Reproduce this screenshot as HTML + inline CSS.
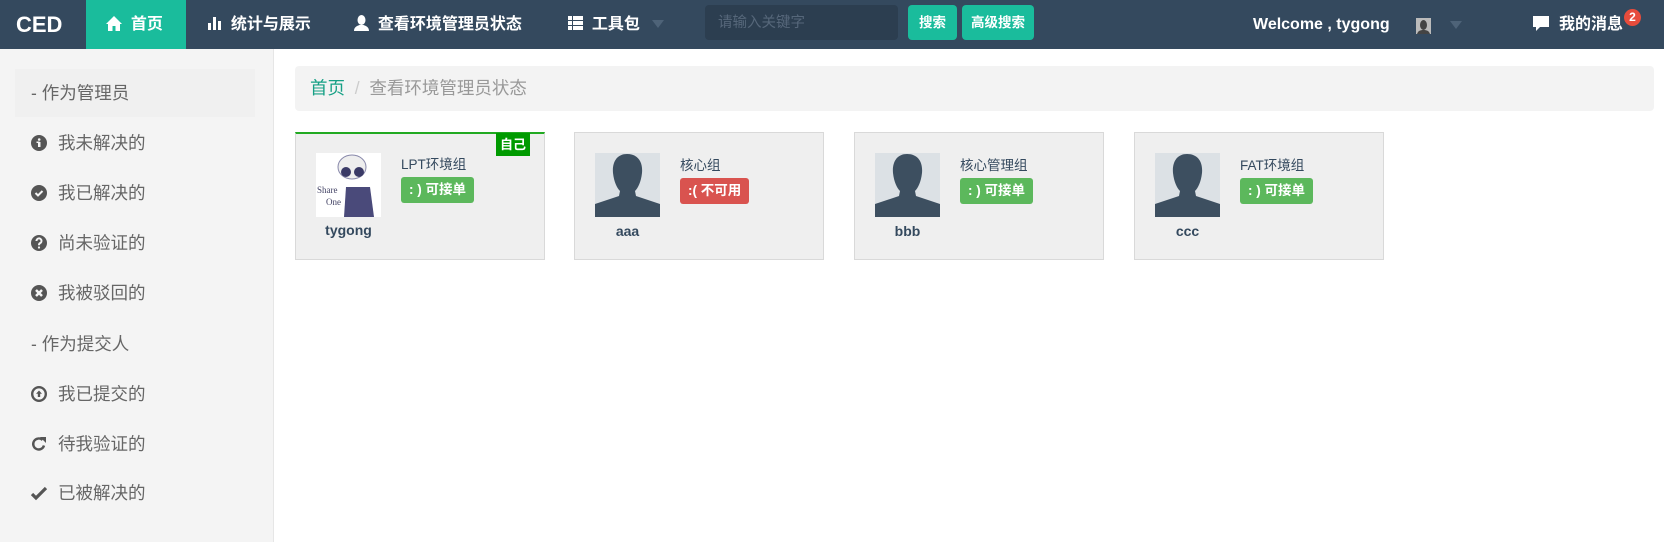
<!DOCTYPE html>
<html><head><meta charset="utf-8"><style>
*{margin:0;padding:0;box-sizing:border-box}
body{width:1664px;height:542px;overflow:hidden;background:#fff;font-family:"Liberation Sans","Noto Sans CJK SC",sans-serif;position:relative}
.nav{position:absolute;left:0;top:0;width:1664px;height:49px;background:#34495e;color:#fff;font-weight:bold}
.a{position:absolute;top:0;height:49px;line-height:49px;font-size:16px;white-space:nowrap}
.side{position:absolute;left:0;top:49px;width:274px;height:493px;background:#f4f4f4;border-right:1px solid #e6e6e6}
.si{position:absolute;left:31px;font-size:17.5px;color:#666;line-height:24px;white-space:nowrap}
.si svg{position:absolute;left:0;top:4px}
.si span{position:absolute;left:27px;top:0}
.card{position:absolute;top:132px;width:250px;height:128px;background:#efefef;border:1px solid #d9d9d9}
.av{position:absolute;left:20px;top:20px;width:65px;height:64px;background:#dce1e5;overflow:hidden}
.nm{position:absolute;left:0;width:105px;top:90px;text-align:center;font-weight:bold;font-size:14px;color:#34495e}
.gt{position:absolute;left:105px;top:21px;font-size:13.5px;color:#34495e}
.bd{position:absolute;left:105px;top:45px;height:26px;line-height:26px;padding:0 8px;border-radius:3px;color:#fff;font-weight:bold;font-size:13.5px}
</style></head><body>
<div class="nav">
 <div class="a" style="left:16px;font-size:22px">CED</div>
 <div class="a" style="left:86px;width:100px;background:#1abc9c;padding-left:20px">
  <svg width="16" height="15" viewBox="0 0 16 15" style="vertical-align:-2px"><path d="M8 0L0 8h2v7h4.5v-5h3v5H14V8h2z" fill="#fff"/></svg>&nbsp; 首页</div>
 <div class="a" style="left:208px"><svg width="14" height="14" viewBox="0 0 14 14" style="vertical-align:-1px"><rect x="0" y="7" width="3" height="7" fill="#fff"/><rect x="5" y="1" width="3" height="13" fill="#fff"/><rect x="10" y="5" width="3" height="9" fill="#fff"/></svg>&nbsp; 统计与展示</div>
 <div class="a" style="left:354px"><svg width="15" height="16" viewBox="0 0 15 16" style="vertical-align:-2px"><ellipse cx="7.5" cy="5" rx="4" ry="5" fill="#fff"/><path d="M0 16c0-4 3-5 5.5-6h4c2.5 1 5.5 2 5.5 6z" fill="#fff"/></svg>&nbsp; 查看环境管理员状态</div>
 <div class="a" style="left:568px"><svg width="15" height="14" viewBox="0 0 15 14" style="vertical-align:-1px"><g fill="#fff"><rect x="0" y="0" width="4" height="4"/><rect x="5" y="0" width="10" height="4"/><rect x="0" y="5" width="4" height="4"/><rect x="5" y="5" width="10" height="4"/><rect x="0" y="10" width="4" height="4"/><rect x="5" y="10" width="10" height="4"/></g></svg>&nbsp; 工具包</div>
 <svg style="position:absolute;left:652px;top:20px" width="12" height="8"><path d="M0 0h12L6 8z" fill="#4e6378"/></svg>
 <div style="position:absolute;left:705px;top:5px;width:193px;height:35px;background:#2c3e50;border-radius:4px;color:#56677a;font-weight:normal;font-size:14.5px;line-height:37px;padding-left:13px">请输入关键字</div>
 <div style="position:absolute;left:908px;top:5px;width:49px;height:35px;background:#1abc9c;border-radius:4px;font-size:13.5px;line-height:35px;text-align:center">搜索</div>
 <div style="position:absolute;left:962px;top:5px;width:72px;height:35px;background:#1abc9c;border-radius:4px;font-size:13.5px;line-height:35px;text-align:center">高级搜索</div>
 <div class="a" style="left:1253px">Welcome , tygong</div>
 <div style="position:absolute;left:1416px;top:18px;width:15px;height:16px;background:#bbb"><svg width="15" height="16"><ellipse cx="7.5" cy="7" rx="3.5" ry="5" fill="#444"/><path d="M1 16c1-3 3-4 6.5-4s5.5 1 6.5 4z" fill="#444"/></svg></div>
 <svg style="position:absolute;left:1450px;top:21px" width="12" height="8"><path d="M0 0h12L6 8z" fill="#4e6378"/></svg>
 <svg style="position:absolute;left:1533px;top:16px" width="16" height="15" viewBox="0 0 16 15"><path d="M0 0h16v11H7l-4 4v-4H0z" fill="#fff"/></svg>
 <div class="a" style="left:1559px">我的消息</div>
 <div style="position:absolute;left:1624px;top:9px;width:17px;height:17px;border-radius:50%;background:#e74c3c;font-size:12px;line-height:17px;text-align:center">2</div>
</div>
<div class="side">
 <div style="position:absolute;left:15px;top:20px;width:240px;height:48px;background:#f0f0f0"></div>
 <div class="si" style="top:32px;left:31px">- 作为管理员</div>
 <div class="si" style="top:82px"><svg width="16" height="16"><circle cx="8" cy="8" r="8" fill="#555"/><rect x="7" y="7" width="2.5" height="5" fill="#f4f4f4"/><rect x="5.5" y="6.5" width="3" height="1.5" fill="#f4f4f4"/><circle cx="8.2" cy="4.5" r="1.3" fill="#f4f4f4"/></svg><span>我未解决的</span></div>
 <div class="si" style="top:132px"><svg width="16" height="16"><circle cx="8" cy="8" r="8" fill="#555"/><path d="M4.5 8l2.5 2.5 4.5-4.5" stroke="#f4f4f4" stroke-width="2" fill="none"/></svg><span>我已解决的</span></div>
 <div class="si" style="top:182px"><svg width="16" height="16"><circle cx="8" cy="8" r="8" fill="#555"/><path d="M5.5 6a2.5 2.5 0 1 1 3.5 2.2c-1 .5-1 1-1 2" stroke="#f4f4f4" stroke-width="2" fill="none"/><circle cx="8" cy="12.5" r="1.1" fill="#f4f4f4"/></svg><span>尚未验证的</span></div>
 <div class="si" style="top:232px"><svg width="16" height="16"><circle cx="8" cy="8" r="8" fill="#555"/><path d="M5 5l6 6M11 5l-6 6" stroke="#f4f4f4" stroke-width="2.5"/></svg><span>我被驳回的</span></div>
 <div class="si" style="top:283px;left:31px">- 作为提交人</div>
 <div class="si" style="top:333px"><svg width="16" height="16"><circle cx="8" cy="8" r="6.8" fill="none" stroke="#555" stroke-width="2.4"/><path d="M8 4.5l3 3.2H9.2V11H6.8V7.7H5z" fill="#555"/></svg><span>我已提交的</span></div>
 <div class="si" style="top:383px"><svg width="16" height="16"><path d="M13 9.5A5.5 5.5 0 1 1 11.5 4" stroke="#555" stroke-width="2.4" fill="none"/><path d="M9 1h6v6z" fill="#555"/></svg><span>待我验证的</span></div>
 <div class="si" style="top:432px"><svg width="16" height="16"><path d="M1 9l4 4 10-10" stroke="#555" stroke-width="3.2" fill="none"/></svg><span>已被解决的</span></div>
</div>
<div style="position:absolute;left:295px;top:66px;width:1359px;height:45px;background:#f3f3f3;border-radius:4px;font-size:17.5px;line-height:45px;padding-left:15px;color:#999"><span style="color:#16a085">首页</span>&nbsp;&nbsp;<span style="color:#ccc">/</span>&nbsp;&nbsp;查看环境管理员状态</div>

<div class="card" style="left:295px;border-top:2px solid #2a2">
 <div class="av" style="background:#fff;top:19px"><svg width="65" height="64"><ellipse cx="36" cy="14" rx="14" ry="12" fill="#eee" stroke="#88a" /><circle cx="30" cy="19" r="5" fill="#3a3a66"/><circle cx="43" cy="19" r="5" fill="#3a3a66"/><path d="M30 34h24l4 30H28z" fill="#4a4a7a"/><text x="1" y="40" font-size="9" fill="#446" font-family="Liberation Serif">Share</text><text x="10" y="52" font-size="9" fill="#446" font-family="Liberation Serif">One</text></svg></div>
 <div class="nm" style="top:88px">tygong</div>
 <div class="gt" style="top:19px">LPT环境组</div>
 <div class="bd" style="background:#5cb85c;top:43px">: ) 可接单</div>
 <div style="position:absolute;right:14px;top:-1px;width:34px;height:23px;background:#009a00;color:#fff;font-weight:bold;font-size:13px;line-height:23px;text-align:center">自己</div>
</div>
<div class="card" style="left:574px">
 <div class="av"><svg width="65" height="64"><path d="M32 1c11 0 16 8 15 19-1 9-4 15-7 18l1 5 24 8v14H0V51l24-8 1-5c-3-3-6-9-7-18-1-11 4-19 14-19z" fill="#3d4f60"/></svg></div>
 <div class="nm">aaa</div><div class="gt">核心组</div>
 <div class="bd" style="background:#d9534f">:( 不可用</div>
</div>
<div class="card" style="left:854px">
 <div class="av"><svg width="65" height="64"><path d="M32 1c11 0 16 8 15 19-1 9-4 15-7 18l1 5 24 8v14H0V51l24-8 1-5c-3-3-6-9-7-18-1-11 4-19 14-19z" fill="#3d4f60"/></svg></div>
 <div class="nm">bbb</div><div class="gt">核心管理组</div>
 <div class="bd" style="background:#5cb85c">: ) 可接单</div>
</div>
<div class="card" style="left:1134px">
 <div class="av"><svg width="65" height="64"><path d="M32 1c11 0 16 8 15 19-1 9-4 15-7 18l1 5 24 8v14H0V51l24-8 1-5c-3-3-6-9-7-18-1-11 4-19 14-19z" fill="#3d4f60"/></svg></div>
 <div class="nm">ccc</div><div class="gt">FAT环境组</div>
 <div class="bd" style="background:#5cb85c">: ) 可接单</div>
</div>
</body></html>
